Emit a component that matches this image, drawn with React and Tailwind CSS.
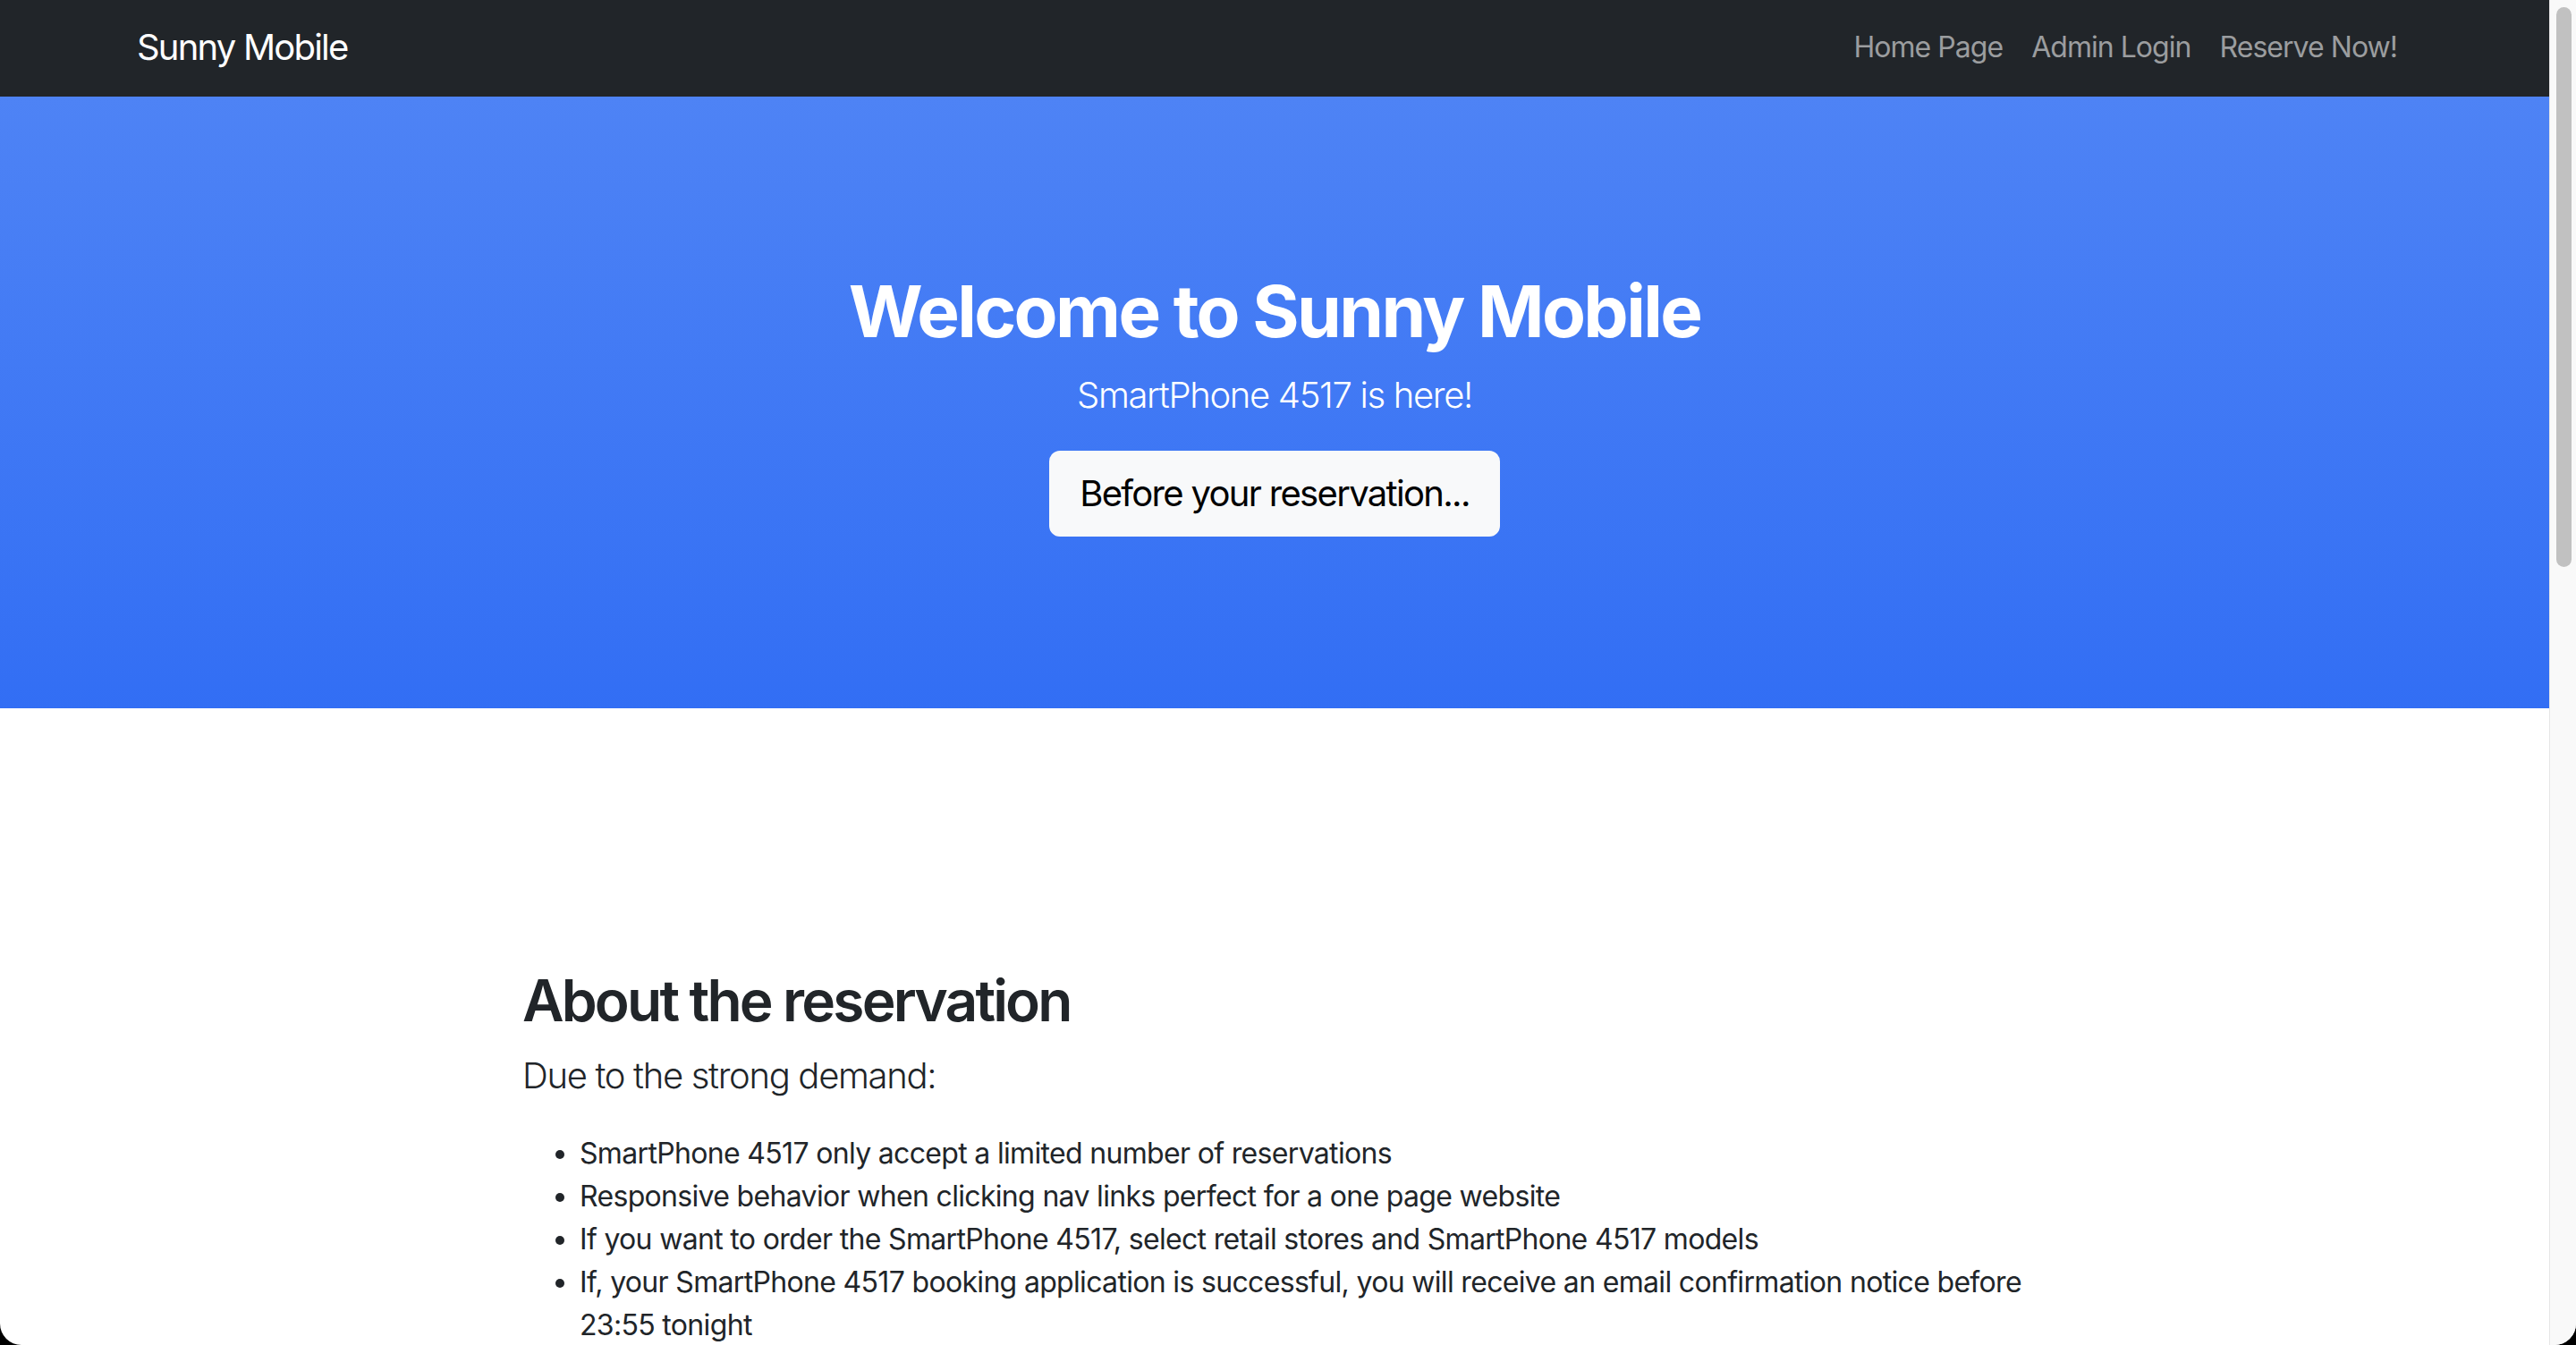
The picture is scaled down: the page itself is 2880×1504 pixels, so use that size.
import React from "react";

const links = ["Home Page", "Admin Login", "Reserve Now!"];

const notes = [
  "SmartPhone 4517 only accept a limited number of reservations",
  "Responsive behavior when clicking nav links perfect for a one page website",
  "If you want to order the SmartPhone 4517, select retail stores and SmartPhone 4517 models",
  "If, your SmartPhone 4517 booking application is successful, you will receive an email confirmation notice before 23:55 tonight",
];

export default function App() {
  return (
    <div className="h-[1504px] bg-black font-['Inter','Liberation_Sans',sans-serif]">
      <div className="h-full flex overflow-hidden rounded-b-[24px] bg-white">
        {/* page */}
        <div className="flex-1 min-w-0 text-[#212529]">
          {/* navbar */}
          <nav className="h-[108px] bg-[#212529] flex items-center justify-between pl-[153px] pr-[170px]">
            <a className="text-[40px] leading-[60px] tracking-[-0.045em] text-white pb-[3px]">Sunny Mobile</a>
            <ul className="flex pb-[3px]">
              {links.map((l, i) => (
                <li key={l}>
                  <a className={`block pl-[16px] text-[32px] leading-[48px] tracking-[-0.03em] text-[#9b9d9f] ${i < links.length - 1 ? "pr-[16px]" : ""}`}>
                    {l}
                  </a>
                </li>
              ))}
            </ul>
          </nav>

          {/* hero */}
          <header className="bg-gradient-to-b from-[#4e83f5] to-[#326ef4] py-[192px] text-center text-white">
            <h1 className="text-[80px] leading-[96px] font-bold tracking-[-0.033em] mb-[16px]">
              Welcome to Sunny Mobile
            </h1>
            <p className="text-[40px] leading-[60px] font-light tracking-[-0.033em] mb-[32px]">SmartPhone 4517 is here!</p>
            <button className="px-[32px] py-[16px] text-[40px] leading-[60px] tracking-[-0.042em] text-black bg-[#f8f9fa] border-2 border-[#f8f9fa] rounded-[12px]">
              Before your reservation...
            </button>
          </header>

          {/* about */}
          <section className="w-[1682px] mx-auto pt-[288px]">
            <h2 className="text-[64px] leading-[77px] font-semibold tracking-[-0.044em] mb-[16px]">
              About the reservation
            </h2>
            <p className="text-[40px] leading-[60px] font-light tracking-[-0.033em] mb-[33px]">Due to the strong demand:</p>
            <ul className="list-disc pl-[64px] text-[32px] leading-[48px] tracking-[-0.021em]">
              {notes.map((n) => (
                <li key={n}>{n}</li>
              ))}
            </ul>
          </section>
        </div>

        {/* scrollbar */}
        <div className="w-[30px] shrink-0 bg-[#f9f9f9] border-l border-[#e6e6e6] pt-[8px] pl-[7px]">
          <div className="w-[17px] h-[626px] rounded-full bg-[#c1c1c1]" />
        </div>
      </div>
    </div>
  );
}
